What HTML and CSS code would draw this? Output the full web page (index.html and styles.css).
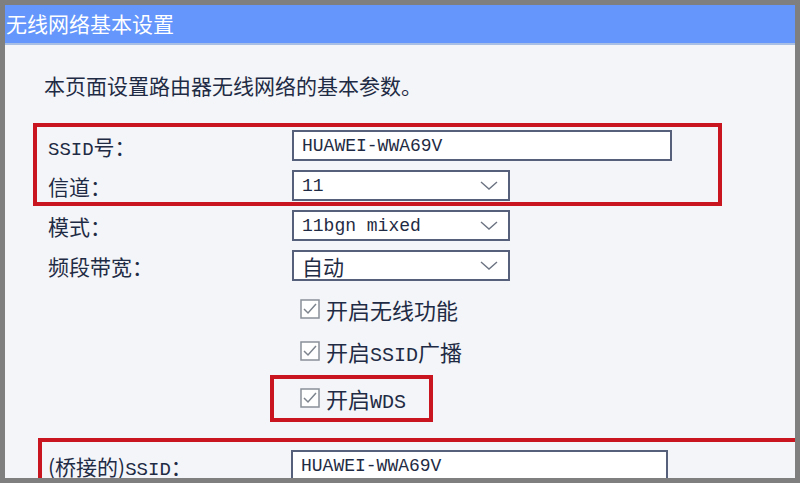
FILE: index.html
```html
<!DOCTYPE html>
<html lang="zh-CN">
<head>
  <meta charset="UTF-8">
  <title>无线网络基本设置</title>
  <link rel="stylesheet" href="styles.css">
</head>
<body>
  <div class="frame">
    <!-- Title bar -->
    <div class="title">无线网络基本设置</div>

    <div class="content">
      <p class="intro">本页面设置路由器无线网络的基本参数。</p>

      <!-- SSID + channel (marked in red) -->
      <div class="mark mark-main">
        <div class="row">
          <span class="label"><span class="en">SSID</span>号：</span>
          <div class="field input"><span class="en">HUAWEI-WWA69V</span></div>
        </div>
        <div class="row">
          <span class="label">信道：</span>
          <div class="field select">
            <span class="en">11</span>
            <svg class="arrow" width="18" height="10" viewBox="0 0 18 10"><polyline points="1,1 9,8 17,1" fill="none" stroke="#6c7482" stroke-width="1.4"/></svg>
          </div>
        </div>
      </div>

      <div class="row row-plain">
        <span class="label">模式：</span>
        <div class="field select">
          <span class="en">11bgn mixed</span>
          <svg class="arrow" width="18" height="10" viewBox="0 0 18 10"><polyline points="1,1 9,8 17,1" fill="none" stroke="#6c7482" stroke-width="1.4"/></svg>
        </div>
      </div>
      <div class="row row-plain row-gap">
        <span class="label">频段带宽：</span>
        <div class="field select">
          <span>自动</span>
          <svg class="arrow" width="18" height="10" viewBox="0 0 18 10"><polyline points="1,1 9,8 17,1" fill="none" stroke="#6c7482" stroke-width="1.4"/></svg>
        </div>
      </div>

      <!-- Checkboxes -->
      <div class="check check-first">
        <svg class="box" width="20" height="20" viewBox="0 0 20 20"><rect x="1" y="1" width="18" height="18" fill="#fff" stroke="#8a9099" stroke-width="1.5"/><polyline points="4,10 8,14 16,5" fill="none" stroke="#7d848e" stroke-width="1.5"/></svg>
        <span>开启无线功能</span>
      </div>
      <div class="check">
        <svg class="box" width="20" height="20" viewBox="0 0 20 20"><rect x="1" y="1" width="18" height="18" fill="#fff" stroke="#8a9099" stroke-width="1.5"/><polyline points="4,10 8,14 16,5" fill="none" stroke="#7d848e" stroke-width="1.5"/></svg>
        <span>开启<span class="en en-wide">SSID</span>广播</span>
      </div>
      <div class="mark mark-wds">
        <div class="check">
          <svg class="box" width="20" height="20" viewBox="0 0 20 20"><rect x="1" y="1" width="18" height="18" fill="#fff" stroke="#8a9099" stroke-width="1.5"/><polyline points="4,10 8,14 16,5" fill="none" stroke="#7d848e" stroke-width="1.5"/></svg>
          <span>开启<span class="en en-wide">WDS</span></span>
        </div>
      </div>

      <!-- Bridge SSID (marked in red, runs off the frame) -->
      <div class="mark mark-bridge">
        <div class="row">
          <span class="label label-bridge">(桥接的)<span class="en">SSID</span>：</span>
          <div class="field input input-bridge"><span class="en">HUAWEI-WWA69V</span></div>
        </div>
      </div>
    </div>
  </div>
</body>
</html>
```

FILE: styles.css
```css
* { box-sizing: border-box; }
body {
  margin: 0;
  font-family: "Noto Sans CJK SC", "Liberation Sans", sans-serif;
  color: #1f2b44;
}
/* Outer gray frame */
.frame {
  width: 800px;
  height: 483px;
  border: 5px solid #7f7f7f;
  background: #f3f5f8;
  overflow: hidden;
}
/* Blue title bar */
.title {
  height: 40px;
  background: #6496fb;
  border-bottom: 2px solid #a9bfe4;
  color: #fff;
  font-size: 21px;
  line-height: 37px;
  padding-left: 1px;
}
.content { padding-left: 28px; }
.intro {
  margin: 25px 0 23px;
  padding-left: 11px;
  font-size: 21px;
  line-height: 30px;
}
.en {
  font-family: "Liberation Mono", monospace;
  font-size: 19px;
}
.en-wide { font-size: 20px; }
/* Form rows */
.row {
  display: flex;
  align-items: center;
  height: 31px;
}
.row-plain {
  margin-top: 4px;
  padding-left: 15px;
}
.row-gap { margin-top: 9px; }
.label {
  width: 244px;
  flex-shrink: 0;
  font-size: 21px;
}
.field {
  height: 31px;
  border: 2px solid #56607a;
  background: #fff;
  display: flex;
  align-items: center;
  padding-left: 8px;
  font-size: 21px;
}
.field .en { font-size: 18px; }
.input { width: 380px; }
.select {
  width: 218px;
  justify-content: space-between;
  padding-right: 10px;
}
.arrow { display: block; }
/* Red annotation boxes */
.mark { border: 4px solid #c9151f; }
.mark-main {
  width: 689px;
  padding: 3px 0 1px 11px;
}
.mark-main .row + .row { margin-top: 9px; }
.mark-wds {
  width: 163px;
  margin: 9px 0 0 237px;
  padding: 3px 0 5px 26px;
}
.mark-bridge {
  width: 780px;
  margin: 16px 0 0 5px;
  padding: 8px 0 0 6px;
}
.label-bridge { width: 243px; }
.input-bridge { width: 377px; }
/* Checkbox rows */
.check {
  display: flex;
  align-items: center;
  height: 31px;
  font-size: 22px;
  gap: 6px;
}
.content > .check {
  margin-top: 11px;
  padding-left: 267px;
}
.content > .check-first { margin-top: 12px; }
.box { display: block; flex-shrink: 0; }
```
